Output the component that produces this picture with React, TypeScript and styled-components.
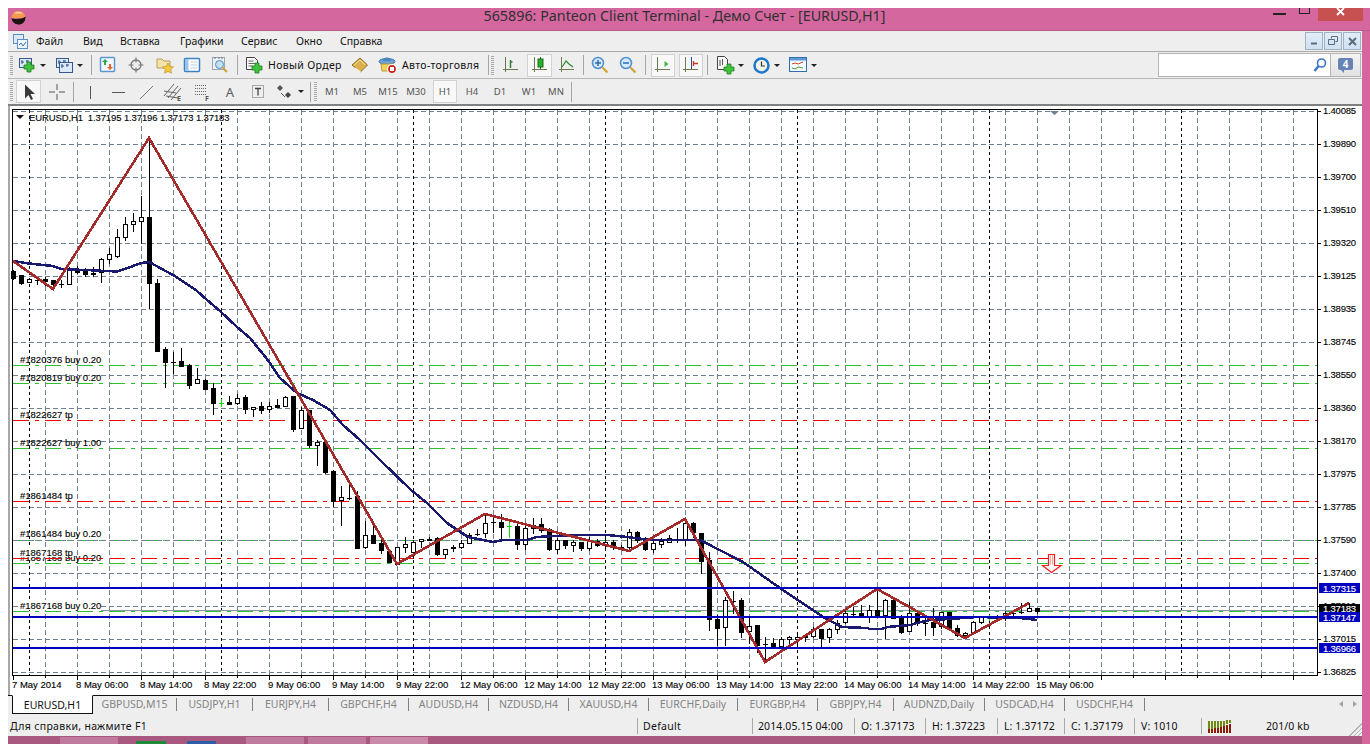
import { FC, ReactNode } from "react";
import styled, { createGlobalStyle } from "styled-components";

const UI_FONT = `"Noto Sans", "Liberation Sans", sans-serif`;

const GlobalStyle = createGlobalStyle`
    html, body {
        margin: 0;
        padding: 0;
        background: #ffffff;
        overflow: hidden;
    }
`;

const Page = styled.div`
    width: 1370px;
    height: 744px;
    padding: 8px 0 0 8px;
    box-sizing: border-box;
    font-family: ${UI_FONT};
`;

const Frame = styled.div`
    width: 1362px;
    height: 736px;
    display: flex;
    flex-direction: column;
    background: #d5679f;
`;

const TitleBar = styled.div`
    height: 22px;
    flex: none;
    display: grid;
    grid-template-columns: 300px 1fr 300px;
    align-items: start;
    border-bottom: 1px solid #b9588a;
`;

const AppIcon = styled.div`
    padding: 0 0 0 3px;
    height: 15px;
`;

const Title = styled.div`
    text-align: center;
    font-size: 14.3px;
    line-height: 15px;
    color: #303030;
    white-space: nowrap;
    padding-right: 9px;
`;

const WindowControls = styled.div`
    display: flex;
    justify-content: flex-end;
    padding-right: 7px;
`;

const CaptionMin = styled.div`
    width: 13px;
    height: 2px;
    margin: 5px 13px 0 0;
    background: #222222;
`;

const CaptionMax = styled.div`
    width: 9px;
    height: 5px;
    margin-right: 8px;
    border: 1px solid #222222;
    border-top: none;
`;

const CaptionClose = styled.div`
    width: 45px;
    height: 13px;
    background: #c75050;
    display: flex;
    justify-content: center;
`;

const Body = styled.div`
    width: 1354px;
    flex: 1;
    display: flex;
    flex-direction: column;
    background: #eeeeee;
    min-height: 0;
`;

const MenuBar = styled.div`
    height: 21px;
    flex: none;
    display: flex;
    align-items: center;
    box-sizing: border-box;
    padding-left: 5px;
    border-bottom: 1px solid #a9a9a9;
`;

const MenuItem = styled.span<{ $w: number }>`
    width: ${(p) => p.$w}px;
    font-size: 10.5px;
    color: #111111;
    white-space: nowrap;
`;

const MdiButtons = styled.div`
    margin-left: auto;
    display: flex;
    gap: 1px;
    padding-right: 1px;
`;

const MdiButton = styled.div`
    width: 16px;
    height: 16px;
    border: 1px solid #9fb2c4;
    background: linear-gradient(#e2edf8, #cfe1f3);
    display: flex;
    align-items: center;
    justify-content: center;
`;

const ToolRow = styled.div<{ $h: number; $line: string }>`
    height: ${(p) => p.$h}px;
    flex: none;
    display: flex;
    align-items: center;
    box-sizing: border-box;
    border-bottom: ${(p) => p.$line};
`;

const Cell = styled.div<{ $w: number; $ml?: number; $on?: boolean }>`
    width: ${(p) => p.$w}px;
    height: 23px;
    flex: none;
    margin-left: ${(p) => p.$ml ?? 0}px;
    box-sizing: border-box;
    display: flex;
    align-items: center;
    justify-content: center;
    font-size: 9.5px;
    color: #555555;
    border: 1px solid ${(p) => (p.$on ? "#d2d2d2" : "transparent")};
    background: ${(p) => (p.$on ? "#f8f8f8" : "transparent")};
`;

const TextToolGlyph = styled.span`
    font-size: 13px;
    color: #5a5a5a;
`;

const ToolLabel = styled.span<{ $w: number; $ml?: number }>`
    width: ${(p) => p.$w}px;
    margin-left: ${(p) => p.$ml ?? 0}px;
    flex: none;
    font-size: 10.5px;
    letter-spacing: 0.35px;
    color: #111111;
    white-space: nowrap;
`;

const Grip = styled.div<{ $w: number; $ml?: number }>`
    width: ${(p) => p.$w}px;
    height: 19px;
    flex: none;
    margin-left: ${(p) => p.$ml ?? 0}px;
    background: repeating-linear-gradient(#a9a9a9 0 1px, transparent 1px 2px) 2px 0 / 3px 100% no-repeat;
`;

const Sep = styled.div<{ $ml?: number; $mr?: number }>`
    width: 1px;
    height: 20px;
    flex: none;
    margin: 0 ${(p) => p.$mr ?? 0}px 0 ${(p) => p.$ml ?? 0}px;
    background: #a6a6a6;
`;

const Caret = styled.div<{ $w: number }>`
    width: ${(p) => p.$w}px;
    flex: none;
    display: flex;
    justify-content: center;
    &::before {
        content: "";
        border-top: 3px solid #222222;
        border-left: 3px solid transparent;
        border-right: 3px solid transparent;
    }
`;

const SearchWrap = styled.div`
    margin-left: auto;
    margin-right: 1px;
    display: flex;
    height: 24px;
    border: 1px solid #b4b4b4;
    box-sizing: border-box;
`;

const SearchField = styled.div`
    width: 171px;
    background: #ffffff;
    display: flex;
    align-items: center;
    justify-content: flex-end;
    padding-right: 3px;
    box-sizing: border-box;
`;

const SearchBadge = styled.div`
    width: 29px;
    border-left: 1px solid #b4b4b4;
    background: linear-gradient(#f4f4f4, #e2e2e2);
    display: flex;
    align-items: center;
    justify-content: center;
    position: relative;
`;

const BadgeCount = styled.div`
    width: 15px;
    height: 12px;
    border-radius: 2px;
    background: #6583b5;
    color: #ffffff;
    font-size: 10px;
    font-weight: 700;
    line-height: 12px;
    text-align: center;
    margin: -3px 0 0 0;
    &::after {
        content: "";
        position: absolute;
        left: 9px;
        top: 15px;
        border-top: 4px solid #6583b5;
        border-left: 4px solid transparent;
    }
`;

const ChartPane = styled.div`
    height: 589px;
    flex: none;
    background: #ffffff;
`;

const ChartSvg = styled.svg`
    display: block;
    font-family: "Liberation Sans", Arial, sans-serif;
    font-size: 9.5px;
`;

const AxisText = styled.text`
    fill: #000000;
    stroke: #000000;
    stroke-width: 0.12px;
`;

const PriceText = styled.text<{ $fill?: string }>`
    fill: ${(p) => p.$fill ?? "#000000"};
    stroke: ${(p) => p.$fill ?? "#000000"};
    stroke-width: 0.12px;
    letter-spacing: -0.2px;
`;

const QuoteText = styled(AxisText)`
    letter-spacing: -0.12px;
`;

const TabBar = styled.div`
    height: 20px;
    flex: none;
    display: flex;
    box-sizing: border-box;
    border-top: 1px solid #111111;
    padding-left: 4px;
    position: relative;
`;

const ActiveTab = styled.div`
    width: 81px;
    height: 19px;
    flex: none;
    box-sizing: border-box;
    margin-top: -1px;
    background: #ffffff;
    border: 1px solid #111111;
    border-top-color: #ffffff;
    font-size: 10.5px;
    color: #111111;
    display: flex;
    align-items: center;
    justify-content: center;
`;

const Tab = styled.div<{ $w: number }>`
    width: ${(p) => p.$w}px;
    height: 13px;
    margin-top: 2px;
    flex: none;
    box-sizing: border-box;
    border-right: 1px solid #808080;
    font-size: 10.5px;
    line-height: 13px;
    color: #858585;
    text-align: center;
    white-space: nowrap;
`;

const TabArrows = styled.div`
    margin-left: auto;
    display: flex;
    gap: 10px;
    padding: 2px 5px 0 0;
`;

const TabArrow = styled.div<{ $left?: boolean }>`
    width: 0;
    height: 0;
    margin-top: 3px;
    border-top: 3px solid transparent;
    border-bottom: 3px solid transparent;
    border-left: ${(p) => (p.$left ? "0" : "4px solid #a2a2a2")};
    border-right: ${(p) => (p.$left ? "4px solid #a2a2a2" : "0")};
`;

const StatusBar = styled.div`
    flex: 1;
    display: flex;
    align-items: center;
    padding-top: 1px;
    position: relative;
    min-height: 0;
`;

const StatusCell = styled.div<{ $w: number; $pl?: number; $end?: boolean; $ls?: number }>`
    width: ${(p) => p.$w}px;
    height: 16px;
    flex: none;
    box-sizing: border-box;
    padding-left: ${(p) => p.$pl ?? 6}px;
    border-right: ${(p) => (p.$end ? "none" : "1px solid #a8a8a8")};
    font-size: 10.5px;
    letter-spacing: ${(p) => p.$ls ?? 0.1}px;
    line-height: 16px;
    color: #111111;
    white-space: nowrap;
    display: flex;
    align-items: center;
`;

const SizeGrip = styled.div`
    position: absolute;
    right: 0;
    bottom: 0;
    width: 15px;
    height: 15px;
    clip-path: polygon(100% 0, 100% 100%, 0 100%);
    background: repeating-linear-gradient(135deg, #b4b4b4 0 1px, transparent 1px 3px);
`;

const Taskbar = styled.div`
    width: 1354px;
    height: 8px;
    flex: none;
    display: flex;
    align-items: flex-end;
    background: #a9587f;
    overflow: hidden;
`;

const TaskItem = styled.div<{ $w: number; $ml: number; $bg: string; $h?: number }>`
    width: ${(p) => p.$w}px;
    height: ${(p) => p.$h ?? 7}px;
    flex: none;
    margin-left: ${(p) => p.$ml}px;
    background: ${(p) => p.$bg};
`;

/* toolbar drawings */
const Icon: FC<{ w?: number; h?: number; children: ReactNode }> = ({ w = 18, h = 18, children }) => (
    <svg width={w} height={h} viewBox={`0 0 ${w} ${h}`}>{children}</svg>
);

const Plus: FC<{ x: number; y: number }> = ({ x, y }) => (
    <path d={`M${x + 3} ${y}h4v3h3v4h-3v3h-4v-3h-3v-4h3z`} fill="#3fc23c" stroke="#1d7d1f" strokeWidth="0.8" />
);

const MiniWindow: FC<{ x: number; y: number; w: number; h: number }> = ({ x, y, w, h }) => (
    <g>
        <rect x={x + 0.5} y={y + 0.5} width={w} height={h} fill="#dce9f7" stroke="#35588f" />
        <path d={`M${x + 2} ${y + 4}h3M${x + 7} ${y + 3}h3M${x + 3} ${y + 2}v4M${x + 8} ${y + 2}v3`} stroke="#35588f" strokeWidth="1" />
    </g>
);

const NewChartIcon = () => (
    <Icon>
        <MiniWindow x={1} y={2} w={12} h={9} />
        <Plus x={6} y={6} />
    </Icon>
);

const ProfilesIcon = () => (
    <Icon>
        <MiniWindow x={1} y={2} w={12} h={9} />
        <MiniWindow x={4} y={6} w={13} h={10} />
    </Icon>
);

const MarketWatchIcon = () => (
    <Icon>
        <rect x="1.5" y="1.5" width="14" height="14" rx="1" fill="#f4f8fc" stroke="#5b95d0" strokeWidth="1.5" />
        <path d="M6 3l3 3H7v3H5V6H3z" fill="#2fa84a" />
        <path d="M11 14l-3-3h2V8h2v3h2z" fill="#e8632b" />
    </Icon>
);

const NavigatorIcon = () => (
    <Icon>
        <circle cx="9" cy="9" r="5" fill="none" stroke="#777777" strokeWidth="1.3" />
        <path d="M9 1.5v5M9 11.5v5M1.5 9h5M11.5 9h5" stroke="#777777" strokeWidth="1.2" />
    </Icon>
);

const FolderStarIcon = () => (
    <Icon>
        <path d="M1 3h5l2 2h6v7H1z" fill="#f5e2a8" stroke="#b8a058" />
        <path d="M12 7l1.7 3.4 3.8.5-2.7 2.6.7 3.7-3.5-1.8-3.4 1.8.7-3.7-2.8-2.6 3.9-.5z" fill="#f4c93c" stroke="#b8922a" strokeWidth="0.7" />
    </Icon>
);

const TerminalIcon = () => (
    <Icon>
        <rect x="1.5" y="2.5" width="15" height="13" rx="1" fill="#ffffff" stroke="#3b7fc4" strokeWidth="1.5" />
        <rect x="2" y="3" width="3.5" height="12" fill="#9cc4ea" />
        <path d="M7.5 6h7M7.5 9h7M7.5 12h7" stroke="#b7cfe6" />
    </Icon>
);

const TesterIcon = () => (
    <Icon>
        <rect x="1.5" y="1.5" width="12" height="12" fill="#eef1f5" stroke="#9aa7b5" />
        <path d="M4 1v2M8 1v2M11 1v2" stroke="#6c7886" />
        <circle cx="8.5" cy="8.5" r="4" fill="#bfe0f5" stroke="#5a8cb8" />
        <path d="M11.5 11.5l4.5 4.5" stroke="#d3a033" strokeWidth="2" />
    </Icon>
);

const OrderIcon = () => (
    <Icon>
        <path d="M1.5 1.5h8l3 3v9h-11z" fill="#f8f8f8" stroke="#444444" />
        <path d="M3.5 5h5M3.5 7.5h7M3.5 10h4" stroke="#666666" />
        <Plus x={7} y={7} />
    </Icon>
);

const BookIcon = () => (
    <Icon>
        <path d="M1 9l8-7 7.5 7-7 7z" fill="#d9b04a" stroke="#8b6d22" />
        <path d="M3 9.5l6-5.5 5 5" fill="none" stroke="#f3e2a4" />
        <path d="M4 12l5.5 4" stroke="#f8f2d8" strokeWidth="1.5" />
    </Icon>
);

const AutoIcon = () => (
    <Icon w={20} h={19}>
        <ellipse cx="9" cy="5.5" rx="8" ry="3" fill="#6aa3d8" stroke="#3f6f9e" />
        <path d="M5 5a4 3.5 0 0 1 8 0" fill="#4b86c2" />
        <path d="M3 8h12l-1 7H4z" fill="#f2d35c" stroke="#b89a3a" />
        <circle cx="14" cy="13" r="4.5" fill="#c9281d" stroke="#ffffff" strokeWidth="1.2" />
        <rect x="12" y="11" width="4" height="4" fill="#ffffff" />
    </Icon>
);

const Axes = () => <path d="M3.5 1v15M1 13.5h15" stroke="#6c7a50" strokeWidth="1" fill="none" />;

const BarChartIcon = () => (
    <Icon>
        <Axes />
        <path d="M8.500 4v8M10.500 6H8.500" stroke="#2d7a2d" strokeWidth="1.400" fill="none" />
    </Icon>
);

const CandleIcon = () => (
    <Icon>
        <Axes />
        <path d="M9.500 1v12" stroke="#1d6a1d" />
        <rect x="7" y="3" width="5" height="8" fill="#29b329" stroke="#1d6a1d" />
    </Icon>
);

const LineIcon = () => (
    <Icon>
        <Axes />
        <path d="M4 11l4-6 3 3 4 3" stroke="#2d8a2d" strokeWidth="1.200" fill="none" />
    </Icon>
);

const ZoomIcon: FC<{ plus?: boolean }> = ({ plus }) => (
    <Icon>
        <circle cx="7" cy="7" r="5.500" fill="#d5e9fb" stroke="#4f8fce" strokeWidth="1.500" />
        <path d={plus ? "M4 7h6M7 4v6" : "M4 7h6"} stroke="#2a6cb0" strokeWidth="1.500" />
        <path d="M11.500 11.500l5 5" stroke="#d3a033" strokeWidth="2.200" />
    </Icon>
);

const ShiftIcon = () => (
    <Icon>
        <Axes />
        <path d="M10.500 5l4 3-4 3z" fill="#3fb53f" />
    </Icon>
);

const AutoScrollIcon = () => (
    <Icon>
        <Axes />
        <path d="M9.500 1v12" stroke="#2a4f90" />
        <path d="M16 7.500h-5M11.500 5v5" stroke="#c8381e" strokeWidth="1.400" />
    </Icon>
);

const IndicatorIcon = () => (
    <Icon w={20} h={20}>
        <path d="M2.500 1.500h7l3 3v10h-10z" fill="#f8f8f8" stroke="#444444" />
        <path d="M5 5v6M7.500 4v6" stroke="#555555" />
        <Plus x={9} y={9} />
    </Icon>
);

const ClockIcon = () => (
    <Icon w={17} h={17}>
        <circle cx="8.500" cy="8.500" r="7" fill="#f4f1e6" stroke="#1c78cc" strokeWidth="2.500" />
        <path d="M8.500 4.500v4.500h3.500" stroke="#333333" strokeWidth="1.200" fill="none" />
    </Icon>
);

const TemplateIcon = () => (
    <Icon w={19} h={16}>
        <rect x="0.500" y="0.500" width="17" height="14" fill="#f7fbff" stroke="#2d6fae" />
        <rect x="1" y="1" width="16" height="2.500" fill="#5b9ad6" />
        <path d="M3 7l3-1 3 1 5-2" stroke="#c8442e" fill="none" />
        <path d="M3 11l3 1 3-2 5 1" stroke="#3fa03f" fill="none" />
    </Icon>
);

const CursorIcon = () => (
    <Icon>
        <path d="M5 1.500l0 14 3.500-3.500 2.500 5 2-1-2.500-5h4.500z" fill="#3a3a3a" />
    </Icon>
);

const CrossIcon = () => (
    <Icon>
        <path d="M9 1v6M9 11v6M1 9h6M11 9h6" stroke="#555555" />
    </Icon>
);

const VLineIcon = () => <Icon><path d="M9.500 3v13" stroke="#555555" /></Icon>;
const HLineIcon = () => <Icon><path d="M2 9.500h13" stroke="#555555" /></Icon>;
const TrendIcon = () => <Icon><path d="M2 16L15 3" stroke="#777777" /></Icon>;

const FiboChannelIcon = () => (
    <Icon w={22} h={20}>
        <path d="M1 14L11 2M5 16L15 4M8 18L18 6M1 9l12 2M3 14l12 2" stroke="#666666" fill="none" />
        <text x="14" y="19" fontSize="7" fontWeight="700" fill="#555555">E</text>
    </Icon>
);

const FiboLevelsIcon = () => (
    <Icon w={20} h={20}>
        <path d="M1 3.500h12M1 6.500h12M1 9.500h12M1 12.500h12" stroke="#666666" strokeDasharray="1 1" />
        <text x="11" y="19" fontSize="7" fontWeight="700" fill="#555555">F</text>
    </Icon>
);

const TextIcon = () => (
    <Icon>
        <rect x="3.500" y="2.500" width="11" height="12" fill="none" stroke="#666666" strokeDasharray="1 1" />
        <path d="M6 5.500h6M9 5.500v7" stroke="#444444" strokeWidth="1.300" />
    </Icon>
);

const ArrowsIcon = () => (
    <Icon>
        <path d="M4 2l3 3-3 3-3-3z" fill="#555555" />
        <path d="M9 14l-4-4" stroke="#555555" />
        <path d="M12 9l3 3-3 3-3-3z" fill="#444444" />
    </Icon>
);

const SearchIcon = () => (
    <svg width="14" height="16" viewBox="0 0 14 16">
        <circle cx="8.500" cy="6" r="4" fill="#ffffff" stroke="#3c73c8" strokeWidth="1.600" />
        <path d="M5.500 9L1.500 14" stroke="#3c73c8" strokeWidth="2.400" />
    </svg>
);

const TerminalLogo = () => (
    <svg width="15" height="15" viewBox="0 0 15 15">
        <path d="M0.500 8a7 7 0 0 1 14 0z" fill="#f29a4a" />
        <path d="M3 3.500a5 3 0 0 1 9 0z" fill="#fbd9a8" />
        <path d="M0.500 8c3 1.500 10 1.500 14-1.500a7 7 0 0 1-14 1.500z" fill="#1d1410" />
        <path d="M1 9c3 2 10 1 13-1a6.500 6 0 0 1-13 1z" fill="#1d1410" />
    </svg>
);

const MenuLogo = () => (
    <svg width="15" height="15" viewBox="0 0 15 15" style={{ flex: "none" }}>
        <rect x="0.500" y="0.500" width="10" height="9" fill="#dce9f7" stroke="#5a8ec4" />
        <rect x="4.500" y="5.500" width="10" height="9" fill="#eef5fc" stroke="#5a8ec4" />
        <path d="M6 11l2-2 2 3 3-4" stroke="#3a6ea8" fill="none" />
    </svg>
);

const VolumeBars = () => {
    const heights = [4, 4, 5, 5, 6, 7, 8, 9];
    return (
        <svg width="24" height="13" viewBox="0 0 24 13">
            {heights.map((h, i) => (
                <g key={i}>
                    <rect x={i * 3} y={i > 5 ? 0 : 1} width="2" height={12 - h} fill="#6f8a12" />
                    <rect x={i * 3} y={13 - h} width="2" height={h} fill="#8f1c06" />
                </g>
            ))}
        </svg>
    );
};

/* chart data, all in page pixels */
type Candle = [number, number, number, number, "w" | "b" | "g"];

// top, bottom, high, low, kind: one row per bar, first bar at x=13, 8px apart
const CANDLES: Candle[] = [
    [271, 278, 270, 279, "b"], [275, 283, 275, 284, "b"], [279, 282, 279, 282, "w"], [280, 280, 277, 284, "b"],
    [279, 281, 277, 285, "b"], [280, 284, 280, 288, "b"], [284, 284, 280, 287, "b"], [270, 284, 267, 284, "w"],
    [269, 272, 266, 273, "b"], [271, 274, 268, 276, "b"], [273, 274, 267, 276, "b"], [259, 272, 258, 282, "w"],
    [254, 259, 248, 263, "w"], [237, 256, 229, 257, "w"], [224, 237, 217, 240, "w"], [221, 224, 213, 231, "w"],
    [217, 221, 196, 243, "w"], [217, 283, 138, 308, "b"], [283, 351, 279, 351, "b"], [349, 362, 347, 387, "b"],
    [362, 362, 352, 373, "b"], [361, 366, 348, 366, "b"], [365, 385, 364, 388, "b"], [379, 383, 368, 383, "w"],
    [380, 389, 379, 389, "b"], [388, 403, 383, 414, "b"], [403, 403, 399, 407, "g"], [402, 404, 396, 404, "b"],
    [398, 403, 394, 404, "w"], [397, 409, 395, 413, "b"], [407, 409, 407, 416, "w"], [406, 410, 402, 413, "b"],
    [406, 409, 402, 412, "w"], [405, 407, 399, 407, "b"], [397, 406, 396, 406, "w"], [396, 429, 396, 431, "b"],
    [410, 428, 407, 428, "w"], [410, 445, 410, 447, "b"], [442, 445, 440, 465, "w"], [442, 472, 441, 473, "b"],
    [471, 501, 470, 506, "b"], [497, 500, 486, 525, "w"], [498, 498, 482, 499, "b"], [496, 548, 491, 548, "b"],
    [535, 547, 521, 548, "w"], [535, 543, 523, 543, "b"], [543, 550, 540, 553, "b"], [551, 562, 551, 562, "b"],
    [547, 564, 547, 564, "w"], [544, 547, 537, 552, "w"], [542, 552, 540, 558, "w"], [539, 541, 539, 547, "w"],
    [539, 540, 537, 540, "b"], [538, 554, 537, 555, "b"], [549, 554, 549, 558, "w"], [547, 548, 545, 551, "b"],
    [543, 547, 540, 548, "w"], [535, 543, 533, 543, "w"], [534, 534, 529, 535, "b"], [523, 533, 514, 537, "w"],
    [522, 522, 515, 532, "b"], [522, 527, 514, 538, "b"], [526, 526, 520, 538, "g"], [526, 544, 523, 549, "b"],
    [528, 544, 525, 549, "w"], [525, 528, 518, 533, "w"], [524, 530, 518, 532, "b"], [529, 549, 528, 550, "b"],
    [540, 549, 538, 553, "w"], [540, 545, 540, 548, "b"], [542, 545, 540, 551, "w"], [542, 548, 542, 550, "b"],
    [541, 548, 537, 550, "w"], [541, 545, 539, 546, "b"], [542, 544, 539, 549, "w"], [542, 547, 540, 549, "b"],
    [547, 547, 545, 549, "b"], [532, 547, 529, 550, "w"], [532, 540, 531, 542, "b"], [538, 549, 537, 550, "b"],
    [543, 549, 540, 552, "w"], [541, 544, 538, 547, "w"], [538, 542, 535, 542, "w"], [539, 539, 528, 542, "b"],
    [523, 540, 520, 545, "w"], [523, 532, 522, 537, "b"], [533, 561, 533, 573, "b"], [560, 619, 552, 630, "b"],
    [619, 628, 615, 645, "b"], [600, 627, 597, 645, "w"], [601, 601, 591, 613, "b"], [600, 632, 598, 637, "b"],
    [626, 631, 618, 643, "w"], [625, 645, 625, 652, "b"], [644, 644, 637, 662, "b"], [643, 646, 638, 647, "b"],
    [639, 646, 637, 647, "w"], [637, 639, 636, 647, "w"], [637, 639, 635, 645, "w"], [636, 637, 634, 641, "b"],
    [629, 636, 627, 637, "w"], [629, 638, 629, 647, "b"], [629, 637, 628, 642, "w"], [623, 629, 620, 633, "w"],
    [613, 622, 608, 623, "w"], [614, 614, 607, 617, "b"], [613, 616, 605, 617, "b"], [610, 616, 605, 622, "w"],
    [610, 615, 590, 617, "b"], [600, 615, 599, 638, "w"], [600, 618, 600, 618, "b"], [617, 632, 615, 633, "b"],
    [613, 631, 602, 631, "w"], [613, 623, 610, 625, "b"], [623, 623, 616, 635, "b"], [622, 627, 608, 635, "b"],
    [612, 626, 612, 628, "w"], [612, 629, 612, 630, "b"], [628, 635, 625, 636, "b"], [633, 635, 632, 638, "w"],
    [622, 633, 621, 633, "w"], [617, 622, 616, 623, "w"], [618, 618, 615, 621, "g"], [616, 618, 615, 618, "w"],
    [613, 616, 611, 620, "w"], [613, 613, 610, 615, "b"], [612, 612, 603, 613, "b"], [608, 611, 603, 611, "w"],
    [608, 611, 608, 613, "b"],
];

const ZIGZAG = "13,261 53,289 149,138 397,564 485,514 629,551 685,519 765,662 877,589 965,638 1029,603";

const AVERAGE = "13,261 29,263.500 53,266 61,269 85,270 117,271.500 125,269 141,263 149,262 173,275 197,291 207,300 220,311 237,327 250,338 267,359 280,378 297,393 313,400 330,410 343,425 360,440 380,460 411,490 427,503 447,523 468,537 493,542 503,540 527,540 537,537 573,535 607,535 627,537 650,540 700,540 743,562 780,588 823,617 842,627 867,628 870,629 882,629 887,627 910,625 917,623 930,620 950,619 977,617 1020,618 1037,620";

const PRICES = ["1.40085", "1.39890", "1.39700", "1.39510", "1.39320", "1.39125", "1.38935", "1.38745", "1.38550", "1.38360", "1.38170", "1.37975", "1.37785", "1.37590", "1.37400", "1.37210", "1.37015", "1.36825"];

const DATES = ["7 May 2014", "8 May 06:00", "8 May 14:00", "8 May 22:00", "9 May 06:00", "9 May 14:00", "9 May 22:00", "12 May 06:00", "12 May 14:00", "12 May 22:00", "13 May 06:00", "13 May 14:00", "13 May 22:00", "14 May 06:00", "14 May 14:00", "14 May 22:00", "15 May 06:00"];

const GREEN_LEVELS = [365, 383, 448, 540, 563, 611];
const RED_LEVELS = [420, 501, 558];
const BLUE_LEVELS = [
    { y: 588, label: "1.37315" },
    { y: 617, label: "1.37147" },
    { y: 648, label: "1.36966" },
];

const ORDER_LABELS = [
    { y: 363, text: "#1820376 buy 0.20" },
    { y: 381, text: "#1820819 buy 0.20" },
    { y: 418, text: "#1822627 tp" },
    { y: 446, text: "#1822627 buy 1.00" },
    { y: 499, text: "#1861484 tp" },
    { y: 537, text: "#1861484 buy 0.20" },
];

const range = (from: number, to: number, step: number) => {
    const out: number[] = [];
    for (let v = from; v <= to; v += step) out.push(v);
    return out;
};

const CandleMark: FC<{ c: Candle; x: number }> = ({ c, x }) => {
    const [top, bottom, high, low, kind] = c;
    if (kind === "g") {
        return (
            <path d={`M${x + 0.5} ${high}V${low}M${x - 2} ${top + 0.5}h5`} stroke="#00e000" fill="none" />
        );
    }
    return (
        <g>
            <path d={`M${x + 0.5} ${high}V${low + 1}`} stroke="#000000" />
            {top === bottom ? (
                <path d={`M${x - 2} ${top + 0.5}h5`} stroke="#000000" />
            ) : (
                <rect
                    x={x - 1.5}
                    y={top + 0.5}
                    width={4}
                    height={bottom - top}
                    fill={kind === "w" ? "#ffffff" : "#000000"}
                    stroke="#000000"
                />
            )}
        </g>
    );
};

const Chart = () => (
    <ChartSvg width={1354} height={589} viewBox="8 106 1354 589">
        <rect x={8} y={106} width={1354} height={589} fill="#ffffff" />
        <rect x={8} y={106} width={2} height={589} fill="#a8a8a8" />
        <g shapeRendering="crispEdges">
            {GREEN_LEVELS.map((y) => (
                <path key={y} d={`M13 ${y + 0.5}H1317`} stroke="#2ec02e" strokeDasharray="16 6 4 6" />
            ))}
            {RED_LEVELS.map((y) => (
                <path key={y} d={`M13 ${y + 0.5}H1317`} stroke="#f00000" strokeDasharray="16 6 4 6" />
            ))}
            {range(45, 1293, 32).map((x) => (
                <path key={x} d={`M${x + 0.5} 110V675`} stroke="#708090" strokeDasharray="5 3" />
            ))}
            {range(111, 672, 33).map((y) => (
                <path key={y} d={`M13 ${y + 0.5}H1317`} stroke="#708090" strokeDasharray="5 3" />
            ))}
            {range(29, 1181, 192).map((x) => (
                <path key={x} d={`M${x + 0.5} 110V675`} stroke="#000000" strokeDasharray="3 3" />
            ))}
            <rect x={19} y={600} width={82} height={10} fill="#ffffff" />
            <path d="M101 610.500H1317" stroke="#8c98a4" />
            {CANDLES.map((c, i) => (
                <CandleMark key={i} c={c} x={13 + i * 8} />
            ))}
            <polyline points={AVERAGE} fill="none" stroke="#191970" strokeWidth="2.500" />
            <polyline points={ZIGZAG} fill="none" stroke="#a52a2a" strokeWidth="2.600" />
            {BLUE_LEVELS.map((l) => (
                <rect key={l.y} x={13} y={l.y - 1} width={1304} height={2} fill="#0000c0" />
            ))}
            <path d="M12.500 109V675.500M12 109.500H1317.500M1317.500 109V675.500M12 675.500H1317.500" stroke="#000000" fill="none" />
            {range(13, 1317, 32).map((x, i) => (
                <path key={x} d={`M${x + 0.5} 675v${i % 2 === 0 ? 5 : 3}`} stroke="#000000" />
            ))}
            {range(111, 672, 33).map((y) => (
                <path key={y} d={`M1317 ${y + 0.5}h4`} stroke="#000000" />
            ))}
        </g>
        {PRICES.map((p, i) => (
            <PriceText key={p} x={1323} y={114 + i * 33}>{p}</PriceText>
        ))}
        {DATES.map((d, i) => (
            <AxisText key={d} x={12 + i * 64} y={688}>{d}</AxisText>
        ))}
        {ORDER_LABELS.map((l) => (
            <AxisText key={l.text} x={20} y={l.y}>{l.text}</AxisText>
        ))}
        <AxisText x={20} y={561}>#1867168 buy 0.20</AxisText>
        <rect x={19} y={547} width={54} height={10} fill="#ffffff" />
        <AxisText x={20} y={556}>#1867168 tp</AxisText>
        <AxisText x={20} y={609}>#1867168 buy 0.20</AxisText>
        <path d="M13 558.500h90" stroke="#f00000" strokeDasharray="16 6 4 6" shapeRendering="crispEdges" />
        <path d="M16 115h8l-4 4z" fill="#111111" />
        <QuoteText x={29} y={121}>{"EURUSD,H1\u00a0 1.37195 1.37196 1.37173 1.37183"}</QuoteText>
        <path d="M1050 111h9l-4.500 4z" fill="#708090" />
        <path d="M1048.500 554.500h6v11h6.500l-9.500 7-9-7h6z" fill="#ffffff" stroke="#ff1a1a" strokeWidth="1.200" />
        <path d="M1050.500 555.500v9M1052.500 555.500v9" stroke="#ffa0a0" />
        <rect x={1319} y={604} width={41} height={8} fill="#000000" />
        <PriceText x={1323} y={612} $fill="#ffffff">1.37183</PriceText>
        {BLUE_LEVELS.map((l) => (
            <g key={l.label}>
                <rect x={1319} y={l.y - 5} width={41} height={10} fill="#0000c0" />
                <PriceText x={1323} y={l.y + 3.500} $fill="#ffffff">{l.label}</PriceText>
            </g>
        ))}
    </ChartSvg>
);

const TABS: [string, number][] = [
    ["GBPUSD,M15", 84], ["USDJPY,H1", 76], ["EURJPY,H4", 76], ["GBPCHF,H4", 80], ["AUDUSD,H4", 80],
    ["NZDUSD,H4", 80], ["XAUUSD,H4", 80], ["EURCHF,Daily", 89], ["EURGBP,H4", 80], ["GBPJPY,H4", 76],
    ["AUDNZD,Daily", 91], ["USDCAD,H4", 80], ["USDCHF,H4", 80],
];

const MENU: [string, number][] = [
    ["Файл", 47], ["Вид", 37], ["Вставка", 60], ["Графики", 61], ["Сервис", 55], ["Окно", 44], ["Справка", 60],
];

const App = () => (
    <Page>
        <GlobalStyle />
        <Frame>
            <TitleBar>
                <AppIcon><TerminalLogo /></AppIcon>
                <Title>565896: Panteon Client Terminal - Демо Счет - [EURUSD,H1]</Title>
                <WindowControls>
                    <CaptionMin />
                    <CaptionMax />
                    <CaptionClose>
                        <svg width="10" height="8" viewBox="0 0 10 8">
                            <path d="M1 0l7 7M8 0L1 7" stroke="#ffffff" strokeWidth="1.800" />
                        </svg>
                    </CaptionClose>
                </WindowControls>
            </TitleBar>
            <Body>
                <MenuBar>
                    <MenuLogo />
                    <MenuItem $w={8} />
                    {MENU.map(([label, w]) => (
                        <MenuItem key={label} $w={w}>{label}</MenuItem>
                    ))}
                    <MdiButtons>
                        <MdiButton>
                            <svg width="8" height="8" viewBox="0 0 8 8"><path d="M1 6.500h6" stroke="#5c6b7a" strokeWidth="2" /></svg>
                        </MdiButton>
                        <MdiButton>
                            <svg width="10" height="10" viewBox="0 0 10 10"><path d="M3.500 2.500V.5h6v5h-2M.5 3.500h6v5h-6z" fill="none" stroke="#5c6b7a" /></svg>
                        </MdiButton>
                        <MdiButton>
                            <svg width="9" height="9" viewBox="0 0 9 9"><path d="M1 1l7 7M8 1L1 8" stroke="#5c6b7a" strokeWidth="2" /></svg>
                        </MdiButton>
                    </MdiButtons>
                </MenuBar>
                <ToolRow $h={27} $line="1px solid #b8b8b8">
                    <Grip $w={8} />
                    <Cell $w={22}><NewChartIcon /></Cell>
                    <Caret $w={10} />
                    <Cell $w={24} $ml={4}><ProfilesIcon /></Cell>
                    <Caret $w={8} />
                    <Sep $ml={7} $mr={2} />
                    <Cell $w={28}><MarketWatchIcon /></Cell>
                    <Cell $w={28}><NavigatorIcon /></Cell>
                    <Cell $w={30}><FolderStarIcon /></Cell>
                    <Cell $w={24}><TerminalIcon /></Cell>
                    <Cell $w={32}><TesterIcon /></Cell>
                    <Sep $ml={1} $mr={2} />
                    <Cell $w={28}><OrderIcon /></Cell>
                    <ToolLabel $w={74}>Новый Ордер</ToolLabel>
                    <Cell $w={35}><BookIcon /></Cell>
                    <Cell $w={22}><AutoIcon /></Cell>
                    <ToolLabel $w={78} $ml={3}>Авто-торговля</ToolLabel>
                    <Sep $ml={8} />
                    <Grip $w={10} $ml={0} />
                    <Cell $w={24}><BarChartIcon /></Cell>
                    <Cell $w={25} $ml={4} $on><CandleIcon /></Cell>
                    <Cell $w={24} $ml={3}><LineIcon /></Cell>
                    <Sep $ml={4} />
                    <Cell $w={26} $ml={3}><ZoomIcon plus /></Cell>
                    <Cell $w={26} $ml={2}><ZoomIcon /></Cell>
                    <Sep $ml={4} />
                    <Cell $w={24} $ml={5} $on><ShiftIcon /></Cell>
                    <Cell $w={24} $ml={4} $on><AutoScrollIcon /></Cell>
                    <Sep $ml={4} />
                    <Cell $w={25} $ml={4}><IndicatorIcon /></Cell>
                    <Caret $w={7} />
                    <Cell $w={24} $ml={5}><ClockIcon /></Cell>
                    <Caret $w={7} />
                    <Cell $w={24} $ml={6}><TemplateIcon /></Cell>
                    <Caret $w={7} />
                    <SearchWrap>
                        <SearchField><SearchIcon /></SearchField>
                        <SearchBadge><BadgeCount>4</BadgeCount></SearchBadge>
                    </SearchWrap>
                </ToolRow>
                <ToolRow $h={27} $line="2px solid #808080">
                    <Grip $w={8} />
                    <Cell $w={25} $on><CursorIcon /></Cell>
                    <Cell $w={24} $ml={4}><CrossIcon /></Cell>
                    <Sep $ml={4} />
                    <Cell $w={24} $ml={4}><VLineIcon /></Cell>
                    <Cell $w={24} $ml={5}><HLineIcon /></Cell>
                    <Cell $w={24} $ml={4}><TrendIcon /></Cell>
                    <Cell $w={24} $ml={3}><FiboChannelIcon /></Cell>
                    <Cell $w={24} $ml={6}><FiboLevelsIcon /></Cell>
                    <Cell $w={24} $ml={2}><TextToolGlyph>A</TextToolGlyph></Cell>
                    <Cell $w={24} $ml={4}><TextIcon /></Cell>
                    <Cell $w={24} $ml={3}><ArrowsIcon /></Cell>
                    <Caret $w={8} />
                    <Sep $ml={5} />
                    <Grip $w={9} $ml={1} />
                    <Cell $w={24} $ml={-1}>M1</Cell>
                    <Cell $w={24} $ml={4}>M5</Cell>
                    <Cell $w={24} $ml={4}>M15</Cell>
                    <Cell $w={24} $ml={4}>M30</Cell>
                    <Cell $w={24} $ml={5} $on>H1</Cell>
                    <Cell $w={24} $ml={3}>H4</Cell>
                    <Cell $w={24} $ml={4}>D1</Cell>
                    <Cell $w={24} $ml={5}>W1</Cell>
                    <Cell $w={24} $ml={3}>MN</Cell>
                    <Sep $ml={3} />
                </ToolRow>
                <ChartPane><Chart /></ChartPane>
                <TabBar>
                    <ActiveTab>EURUSD,H1</ActiveTab>
                    {TABS.map(([label, w]) => (
                        <Tab key={label} $w={w}>{label}</Tab>
                    ))}
                    <TabArrows>
                        <TabArrow $left />
                        <TabArrow />
                    </TabArrows>
                </TabBar>
                <StatusBar>
                    <StatusCell $w={630} $pl={2} $ls={0.32}>Для справки, нажмите F1</StatusCell>
                    <StatusCell $w={115} $pl={5} $ls={0.3}>Default</StatusCell>
                    <StatusCell $w={102} $pl={5}>2014.05.15 04:00</StatusCell>
                    <StatusCell $w={71}>O: 1.37173</StatusCell>
                    <StatusCell $w={72}>H: 1.37223</StatusCell>
                    <StatusCell $w={67}>L: 1.37172</StatusCell>
                    <StatusCell $w={70}>C: 1.37179</StatusCell>
                    <StatusCell $w={67}>V: 1010</StatusCell>
                    <StatusCell $w={58} $end><VolumeBars /></StatusCell>
                    <StatusCell $w={60} $end>201/0 kb</StatusCell>
                    <SizeGrip />
                </StatusBar>
            </Body>
            <Taskbar>
                <TaskItem $w={58} $ml={52} $bg="#c07a9e" />
                <TaskItem $w={30} $ml={18} $bg="#1e8a3a" $h={3} />
                <TaskItem $w={29} $ml={21} $bg="#2f5fa8" $h={3} />
                <TaskItem $w={58} $ml={30} $bg="#c07a9e" />
                <TaskItem $w={58} $ml={4} $bg="#c07a9e" />
                <TaskItem $w={58} $ml={4} $bg="#cc8aaa" />
            </Taskbar>
        </Frame>
    </Page>
);

export default App;
